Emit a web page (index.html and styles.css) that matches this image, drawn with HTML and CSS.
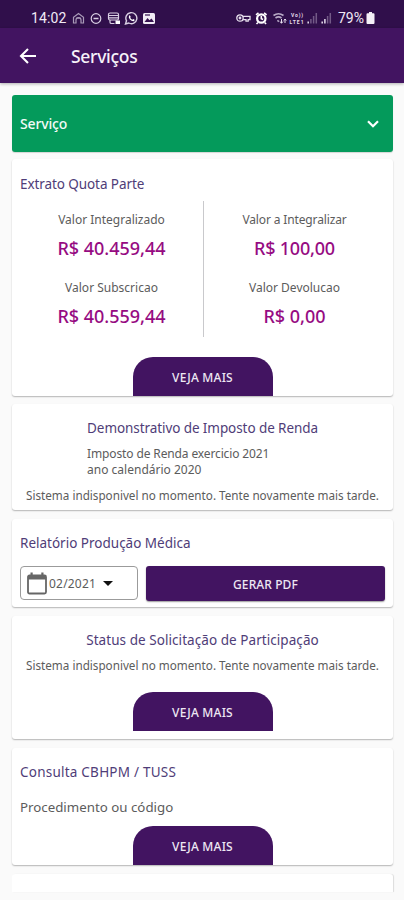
FILE: index.html
```
<!DOCTYPE html>
<html lang="pt-BR">
<head>
<meta charset="utf-8">
<title>Serviços</title>
<link rel="stylesheet" href="styles.css">
</head>
<body>
<div class="status">
  <span class="clock">14:02</span>
  <svg class="st-left" width="86" height="14" viewBox="0 0 86 14" fill="none" stroke="#d9cfe3" stroke-width="1.2">
    <path d="M1.500 12V6.300L6.500 2.500l5 3.800V12H9V9a2.500 2.500 0 0 0-5 0v3z" stroke="#a99bb8"/>
    <path d="M4.500 7.200h4" stroke="#a99bb8"/>
    <circle cx="24" cy="7.500" r="4.800"/><path d="M21.500 7.500h5" stroke-width="1.500"/>
    <rect x="36.500" y="2" width="10" height="7" rx="1.500"/><path d="M37 4.500h9M37 6.800h9M38 9v2.200q0 1.300 1.500 1.300h3"/><path d="M43.500 9.500h4.500v3.500h-4.500z" fill="#fff" stroke="none"/>
    <path d="M53.500 13l1-3.300a5.500 5.500 0 1 1 2.300 2.300z" stroke-width="1.400"/>
    <path d="M57 4.800q.7-.9 1.300.1l.4 1-.5.8q.7 1.500 2.200 2.100l.8-.7 1.400.7q.3 1-1 1.400-2 .1-3.700-1.800-1.700-2-.9-3.600z" fill="#fff" stroke="none"/>
    <rect x="71" y="2" width="12" height="11" rx="1.500" fill="#f1ecf5" stroke="none"/><path d="M72.500 11l3-4 2 2.300 2-1.800 2.500 3.500z" fill="#35124f" stroke="none"/><path d="M73 4h5" stroke="#35124f"/>
  </svg>
  <svg class="st-right" width="98" height="14" viewBox="0 0 98 14" fill="none" stroke="#e6dfed" stroke-width="1.300">
    <circle cx="4" cy="7" r="3.200"/><circle cx="4" cy="7" r=".8"/><path d="M7 5.300h7v3.400h-1.800v1.500H10V8.700H7"/>
    <circle cx="25.300" cy="7.500" r="4.200" stroke="#fff" stroke-width="2.200"/><path d="M25.300 5v2.800l1.800.8M20 3.800l2.500-2M30.600 3.800l-2.500-2M22 11.500L20.500 13M28.600 11.500l1.500 1.500" stroke="#fff" stroke-width="1.600"/>
    <path d="M37.500 4.500q5-3.500 10 0M39.500 7q3-2.200 6 0M41.500 9.200l1.300 1.500" stroke="#b8aac6" stroke-width="1.600"/><path d="M45.500 8v4M43.800 10.500l1.700 1.700 1.500-1.700M49 12V8M47.800 9.500L49 8l1.300 1.500" stroke-width="1"/>
    <text class="tiny" x="55" y="5.800" textLength="12">Vo))</text><text class="tiny" x="53.500" y="12.800" textLength="14">LTE1</text>
    <path d="M72.200 12.500v-2" stroke-width="1.500"/><path d="M74.900 12.500V8M77.600 12.500V5M80.300 12.500V2" stroke="#735a87" stroke-width="1.500"/>
    <path d="M86.200 12.500v-2M88.900 12.500V8" stroke-width="1.500"/><path d="M91.600 12.500V5M94.300 12.500V2" stroke="#735a87" stroke-width="1.500"/>
  </svg>
  <span class="pct">79%</span>
  <svg class="batt" width="9" height="12" viewBox="0 0 9 12"><path d="M3 0h3v1.200h1.500q1 0 1 1V11q0 1-1 1h-6q-1 0-1-1V2.200q0-1 1-1H3z" fill="#f4f0f7"/></svg>
</div>
<header class="appbar">
  <svg width="18" height="18" viewBox="0 0 18 18" fill="none" stroke="#fff" stroke-width="2.100"><path d="M17 9H2.500M9 2L2 9l7 7"/></svg>
  <h1>Serviços</h1>
</header>
<main>
  <div class="select">
    <span>Serviço</span>
    <svg width="12" height="8" viewBox="0 0 12 8" fill="none" stroke="#fff" stroke-width="2.200"><path d="M1 1.200L6 6.200l5-5"/></svg>
  </div>

  <section class="card extrato">
    <h2>Extrato Quota Parte</h2>
    <div class="cols">
      <div class="col">
        <p class="label">Valor Integralizado</p><p class="value">R$ 40.459,44</p>
        <p class="label">Valor Subscricao</p><p class="value">R$ 40.559,44</p>
      </div>
      <div class="col">
        <p class="label tight">Valor a Integralizar</p><p class="value tight">R$ 100,00</p>
        <p class="label">Valor Devolucao</p><p class="value">R$ 0,00</p>
      </div>
    </div>
    <button class="more">VEJA MAIS</button>
  </section>

  <section class="card imposto">
    <div class="block">
      <h2>Demonstrativo de Imposto de Renda</h2>
      <p class="desc"><span class="fit">Imposto de Renda exercicio 2021</span><br>ano calendário 2020</p>
    </div>
    <p class="msg">Sistema indisponivel no momento. Tente novamente mais tarde.</p>
  </section>

  <section class="card relatorio">
    <h2>Relatório Produção Médica</h2>
    <div class="row">
      <div class="date">
        <svg width="20" height="23" viewBox="0 0 20 23"><rect x="1" y="3.500" width="18" height="18" rx="1.500" fill="none" stroke="#666" stroke-width="1.800"/><path d="M1 3h18v4.500H1zM3.500.5h2.200V4H3.500zM14.300.5h2.200V4h-2.200z" fill="#666"/></svg>
        <span>02/2021</span>
        <i class="caret"></i>
      </div>
      <button class="pdf">GERAR PDF</button>
    </div>
  </section>

  <section class="card solicitacao">
    <h2>Status de Solicitação de Participação</h2>
    <p class="msg">Sistema indisponivel no momento. Tente novamente mais tarde.</p>
    <button class="more">VEJA MAIS</button>
  </section>

  <section class="card consulta">
    <h2>Consulta CBHPM / TUSS</h2>
    <p class="hint">Procedimento ou código</p>
    <button class="more">VEJA MAIS</button>
  </section>

  <section class="card next"></section>
</main>
</body>
</html>
```
FILE: styles.css
```
* { box-sizing: border-box; }
body, h1, h2, p { margin: 0; }
body {
  width: 404px;
  height: 900px;
  overflow: hidden;
  background: #fafafa;
  font-family: "Noto Sans", sans-serif;
  color: #5c5c5c;
}
svg { display: block; flex: none; }

.status {
  display: flex;
  align-items: center;
  height: 28px;
  padding: 7px 0 0 31px;
  background: #300f4b;
  color: #f0eaf5;
  font: 14px/20px Roboto, sans-serif;
}
.clock { width: 41px; letter-spacing: .1px; }
.st-right { margin-left: 78px; }
.tiny { font: bold 5px Roboto, sans-serif; fill: #e6dfed; stroke: none; }
.pct { margin-left: 4px; width: 28px; }

.appbar {
  display: flex;
  align-items: center;
  height: 55px;
  padding-left: 19px;
  background: #421461;
  box-shadow: 0 1px 3px rgba(0, 0, 0, .3);
}
.appbar h1 {
  margin-left: 34px;
  font-size: 17.500px;
  font-weight: 500;
  letter-spacing: -.3px;
  line-height: 24px;
  color: #f6f2f9;
}

main { padding: 12px 11px 0 12px; }

.select {
  display: flex;
  align-items: center;
  justify-content: space-between;
  height: 57px;
  padding: 0 14px 0 8px;
  border-radius: 3px;
  background: #049a5b;
  box-shadow: 0 1px 1px rgba(0, 0, 0, .15);
  color: #f2fbf7;
  font-size: 14px;
  font-weight: 500;
  letter-spacing: -.15px;
}

.card {
  display: flex;
  flex-direction: column;
  margin-top: 8px;
  padding: 0 8px;
  border-radius: 3px;
  background: #fff;
  box-shadow: 0 1px 1.500px rgba(0, 0, 0, .28);
}
h2 {
  font-size: 13.500px;
  font-weight: 400;
  line-height: 20px;
  color: #4f3d78;
}
.extrato { height: 237px; margin-top: 7px; padding-top: 15px; }
.cols {
  display: grid;
  grid-template-columns: 184px 181px;
  height: 136px;
  margin-top: 7px;
}
.col { padding-top: 9px; text-align: center; }
.col:first-child { border-right: 1px solid #c9c9cc; }
.label { font-size: 12px; line-height: 20px; }
.label.tight { letter-spacing: -.14px; }
.value {
  margin: 6px 0 18px;
  font-size: 18px;
  font-weight: 500;
  line-height: 24px;
  color: #960b82;
}
.value:last-child { margin-bottom: 0; }
.value.tight { letter-spacing: -.2px; }

button {
  border: 0;
  padding: 0;
  background: #421461;
  color: #eee8f3;
  font: 500 12px "Noto Sans", sans-serif;
}
.more {
  align-self: center;
  width: 140px;
  height: 39px;
  margin-top: auto;
  padding-top: 2px;
  border-radius: 20px 20px 0 0;
  letter-spacing: .2px;
}

.imposto { height: 106px; padding-top: 14px; align-items: center; }
.imposto h2, .extrato h2 { letter-spacing: -.08px; }
.desc { margin-top: 8px; font-size: 12px; line-height: 16px; }
.fit { letter-spacing: -.13px; }
.msg {
  align-self: center;
  white-space: nowrap;
  font-size: 11.700px;
  line-height: 18px;
}
.imposto .msg { margin-top: 8px; }

.relatorio { height: 88px; margin-top: 9px; padding-top: 14px; }
.row { display: flex; gap: 8px; margin-top: 13px; }
.date {
  display: flex;
  align-items: center;
  width: 118px;
  height: 34px;
  padding-left: 6px;
  border: 1px solid #9b9b9b;
  border-radius: 4px;
  font-size: 12px;
  letter-spacing: .2px;
}
.date span { margin-left: 2px; }
.caret {
  margin-left: 7px;
  border: 5px solid transparent;
  border-top: 5px solid #111;
  border-bottom: 0;
}
.pdf {
  width: 239px;
  height: 35px;
  padding-top: 1px;
  border-radius: 3px;
  box-shadow: 0 1px 1.500px rgba(0, 0, 0, .4);
  letter-spacing: .1px;
}

.solicitacao { height: 123px; margin-top: 9px; padding: 14px 8px 8px; }
.solicitacao h2 { align-self: center; letter-spacing: .06px; }
.solicitacao .msg { margin-top: 6px; }

.consulta { height: 117px; margin-top: 9px; padding-top: 14px; }
.consulta h2 { letter-spacing: .23px; }
.hint { margin-top: 15px; font-size: 13.300px; line-height: 20px; }

.next { height: 18px; margin-top: 9px; box-shadow: 1px 0 1px rgba(0, 0, 0, .12); border-radius: 3px 3px 0 0; }
```
